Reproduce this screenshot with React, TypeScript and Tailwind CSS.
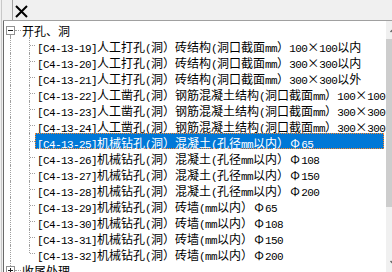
import React from "react";

type Part = { k: "a" | "c" | "w"; s: string };

function split(s: string): Part[] {
  const out: Part[] = [];
  for (const ch of Array.from(s)) {
    const k: Part["k"] = ch === "×" || ch === "Φ" ? "w" : ch.charCodeAt(0) < 128 ? "a" : "c";
    const last = out[out.length - 1];
    if (last && last.k === k && k !== "w") last.s += ch;
    else out.push({ k, s: ch });
  }
  return out;
}

function Txt({ s }: { s: string }) {
  return (
    <>
      {split(s).map((p, i) =>
        p.k === "a" ? (
          <span key={i} className="font-['Liberation_Mono',monospace] text-[11px] tracking-[-0.6px]">
            {p.s}
          </span>
        ) : p.k === "w" ? (
          <span key={i} className="inline-block w-[12px] text-center font-['Noto_Sans_CJK_SC',sans-serif] text-[12px]">
            {p.s}
          </span>
        ) : (
          <span key={i} className="font-['Noto_Sans_CJK_SC',sans-serif] text-[12px]">
            {p.s}
          </span>
        )
      )}
    </>
  );
}

const items = [
  "[C4-13-19]人工打孔(洞）砖结构(洞口截面mm）100×100以内",
  "[C4-13-20]人工打孔(洞）砖结构(洞口截面mm）300×300以内",
  "[C4-13-21]人工打孔(洞）砖结构(洞口截面mm）300×300以外",
  "[C4-13-22]人工凿孔(洞）钢筋混凝土结构(洞口截面mm）100×100以内",
  "[C4-13-23]人工凿孔(洞）钢筋混凝土结构(洞口截面mm）300×300以内",
  "[C4-13-24]人工凿孔(洞）钢筋混凝土结构(洞口截面mm）300×300以外",
  "[C4-13-25]机械钻孔(洞）混凝土(孔径mm以内）Φ65",
  "[C4-13-26]机械钻孔(洞）混凝土(孔径mm以内）Φ108",
  "[C4-13-27]机械钻孔(洞）混凝土(孔径mm以内）Φ150",
  "[C4-13-28]机械钻孔(洞）混凝土(孔径mm以内）Φ200",
  "[C4-13-29]机械钻孔(洞）砖墙(mm以内）Φ65",
  "[C4-13-30]机械钻孔(洞）砖墙(mm以内）Φ108",
  "[C4-13-31]机械钻孔(洞）砖墙(mm以内）Φ150",
  "[C4-13-32]机械钻孔(洞）砖墙(mm以内）Φ200",
];

const dot = "border-dotted border-[#a0a0a0]";

function ChildRow({ s, last, selected }: { s: string; last: boolean; selected: boolean }) {
  return (
    <div className="flex h-[16px] shrink-0">
      <div className="w-[6px] shrink-0" />
      <div className={`w-[1px] shrink-0 border-l ${dot}`} />
      <div className="w-[18px] shrink-0" />
      <div className="w-[1px] shrink-0 flex flex-col">
        <div className={`border-l ${dot} ${last ? "h-[8px]" : "h-full"}`} />
      </div>
      <div className="w-[5px] shrink-0 flex flex-col">
        <div className="h-[8px]" />
        <div className={`border-t ${dot}`} />
      </div>
      {selected ? (
        <div className="w-[349px] shrink-0 bg-[#0078d7] text-white border border-dotted border-[#ff8728] pl-[1px] leading-[14px] whitespace-nowrap">
          <Txt s={s} />
        </div>
      ) : (
        <div className="shrink-0 pl-[2px] leading-[16px] whitespace-nowrap text-black">
          <Txt s={s} />
        </div>
      )}
    </div>
  );
}

function ExpRow({ label, open, lineAbove, lineBelow }: { label: string; open: boolean; lineAbove: boolean; lineBelow: boolean }) {
  return (
    <div className="flex h-[16px] shrink-0">
      <div className="w-[2px] shrink-0" />
      <div className="w-[9px] shrink-0 flex flex-col">
        <div className="h-[5px] flex justify-center">
          {lineAbove && <div className={`border-l ${dot} h-full`} />}
        </div>
        <div className="h-[9px] border border-[#919191] bg-white flex items-center justify-center relative">
          <div className="w-[5px] h-[1px] bg-[#1a1a1a]" />
          {!open && <div className="absolute w-[1px] h-[5px] bg-[#1a1a1a]" />}
        </div>
        <div className="flex-1 flex justify-center">
          {lineBelow && <div className={`border-l ${dot} h-full`} />}
        </div>
      </div>
      <div className="w-[6px] shrink-0 flex flex-col">
        <div className="h-[9px]" />
        <div className={`border-t ${dot}`} />
      </div>
      <div className="pl-[1px] leading-[16px] whitespace-nowrap text-black">
        <Txt s={label} />
      </div>
    </div>
  );
}

export default function App() {
  return (
    <div className="w-[392px] h-[272px] overflow-hidden bg-[#f0f0f0] flex font-['Noto_Sans_CJK_SC',sans-serif]">
      <div className="w-[3px] shrink-0 pl-[1px]">
        <div className="w-[1px] h-full bg-[#c8c8c8]" />
      </div>
      <div className="flex-1 flex flex-col min-w-0">
        <div className="h-[21px] shrink-0 flex border-b border-[#a0a0a0]">
          <div className="w-[9px] shrink-0" />
          <div className="w-[1px] shrink-0 bg-[#a0a0a0]" />
          <div className="w-[2px] shrink-0" />
          <div className="pt-[5px]">
            <svg width="13" height="13" viewBox="0 0 13 13">
              <path d="M1 1 L12 12 M12 1 L1 12" stroke="#000" strokeWidth="2" />
            </svg>
          </div>
        </div>
        <div className="flex-1 flex border-l border-[#696969] min-h-0 overflow-hidden">
          <div className="w-[382px] shrink-0 bg-white flex flex-col overflow-hidden">
            <ExpRow label="开孔、洞" open lineAbove={false} lineBelow />
            {items.map((s, i) => (
              <ChildRow key={s} s={s} last={i === items.length - 1} selected={i === 6} />
            ))}
            <ExpRow label="收尾处理" open={false} lineAbove lineBelow={false} />
          </div>
          <div className="w-[17px] shrink-0 flex flex-col bg-[#f0f0f0]">
            <div className="h-[18px] shrink-0 flex items-center justify-center">
              <svg width="9" height="6" viewBox="0 0 9 6">
                <path d="M0.5 5 L4.5 1 L8.5 5" stroke="#606060" strokeWidth="1.5" fill="none" />
              </svg>
            </div>
            <div className="h-[168px] shrink-0 bg-[#cdcdcd] mr-[1px]" />
            <div className="flex-1" />
            <div className="h-[18px] shrink-0 flex items-center justify-center">
              <svg width="9" height="6" viewBox="0 0 9 6">
                <path d="M0.5 1 L4.5 5 L8.5 1" stroke="#606060" strokeWidth="1.5" fill="none" />
              </svg>
            </div>
          </div>
        </div>
      </div>
    </div>
  );
}
